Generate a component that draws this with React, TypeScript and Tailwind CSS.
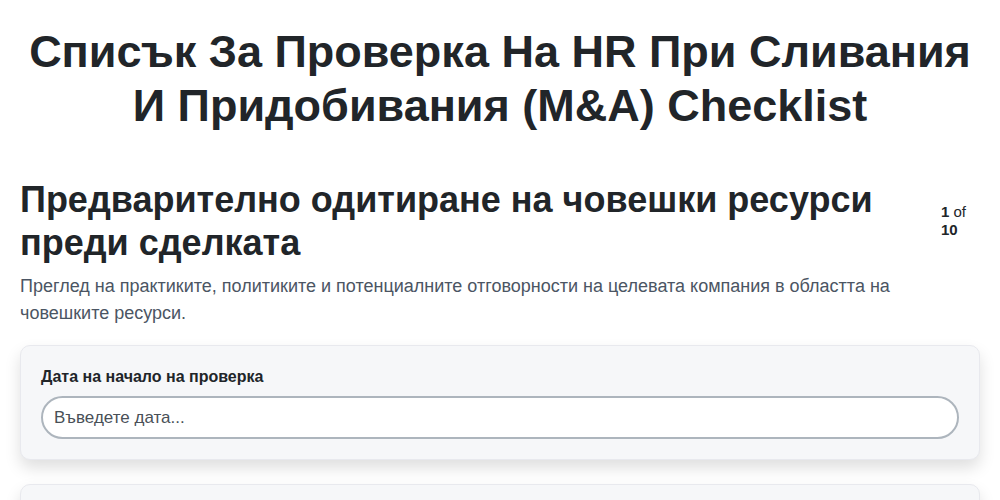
import { useState } from 'react';

const sections = [
  {
    title: 'Предварително одитиране на човешки ресурси преди сделката',
    description:
      'Преглед на практиките, политиките и потенциалните отговорности на целевата компания в областта на човешките ресурси.',
    fields: [{ label: 'Дата на начало на проверка', placeholder: 'Въведете дата...' }]
  }
];

export default function App() {
  const [values, setValues] = useState<Record<string, string>>({});
  const section = sections[0];

  return (
    <div className="min-h-screen bg-white px-5 font-['Liberation_Sans',Arial,sans-serif] text-[#212529]">
      <h1 className="pt-[25px] text-center text-[45px] font-bold leading-[54px]">
        Списък За Проверка На HR При Сливания И Придобивания (M&amp;A) Checklist
      </h1>

      <div className="mt-[45px] flex items-center gap-5">
        <h2 className="flex-1 text-[36px] font-bold leading-[43px]">{section.title}</h2>
        <div className="w-[39px] shrink-0 text-[15px] leading-[18px]">
          <span className="font-bold">1</span> of <span className="font-bold">10</span>
        </div>
      </div>
      <p className="mt-[9px] text-[18px] leading-[27px] text-[#4b5563]">{section.description}</p>

      <div className="mt-[18px] flex flex-col gap-6">
        {section.fields.map((f) => (
          <div
            key={f.label}
            className="rounded-[10px] border border-[#e8e9ee] bg-[#f6f7f9] p-5 shadow-[0_8px_16px_rgba(0,0,0,0.13)]"
          >
            <label className="mb-2 block text-[16px] font-bold leading-[22px]">{f.label}</label>
            <input
              className="h-[43px] w-full rounded-[22px] border-2 border-[#adb5bd] bg-white px-[11px] text-[17px] text-[#212529] placeholder:text-[#495057] focus:outline-none"
              placeholder={f.placeholder}
              value={values[f.label] ?? ''}
              onChange={(e) => setValues((v) => ({ ...v, [f.label]: e.target.value }))}
            />
          </div>
        ))}
        <div className="h-[80px] rounded-[10px] border border-[#e8e9ee] bg-[#f6f7f9] shadow-[0_8px_16px_rgba(0,0,0,0.13)]" />
      </div>
    </div>
  );
}
